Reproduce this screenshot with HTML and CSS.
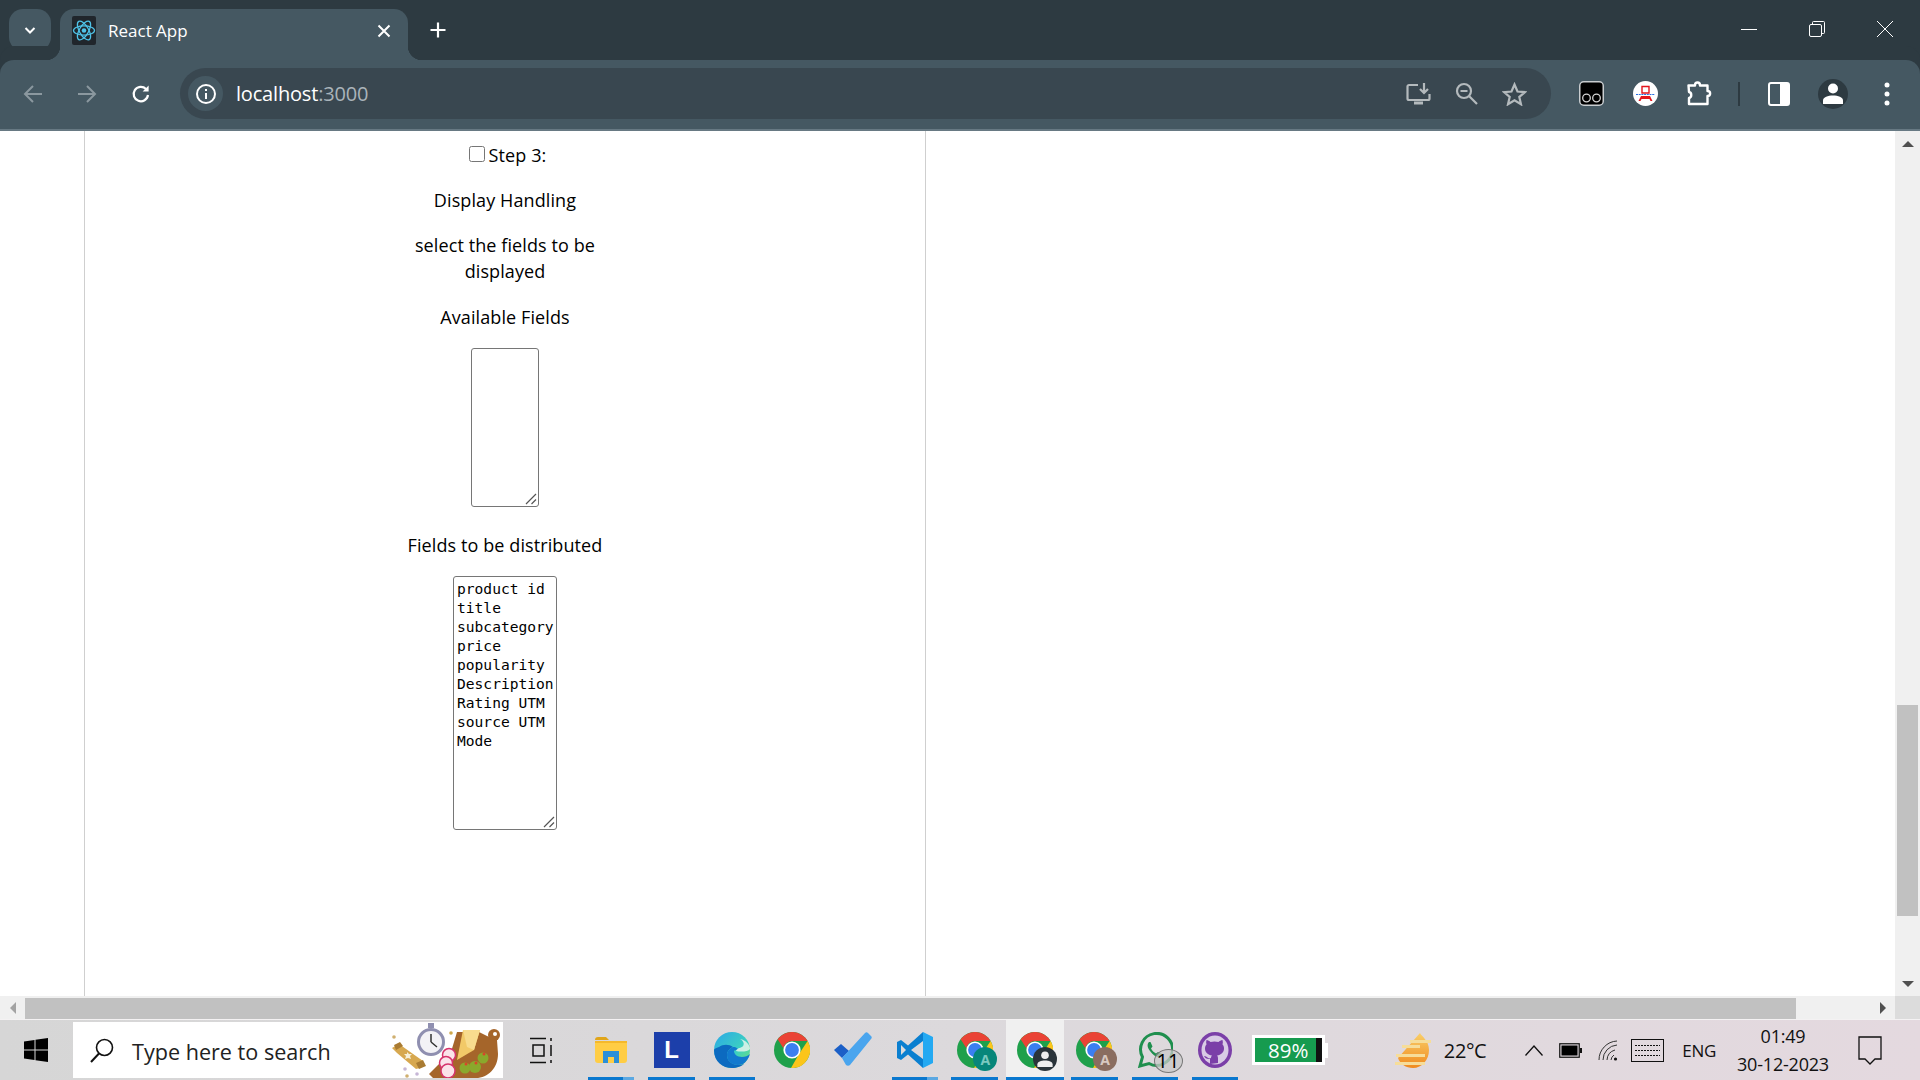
FILE: index.html
```html
<!DOCTYPE html>
<html lang="en">
<head>
    <meta charset="UTF-8">
    <meta name="viewport" content="width=device-width, initial-scale=1.0">
    <title>React App</title>
    <link rel="stylesheet" href="styles.css">
</head>
<body>
    <svg class="defs" aria-hidden="true">
        <symbol id="chrome" viewBox="0 0 36 36">
            <circle cx="18" cy="18" r="18" fill="#1fa04b"/>
            <path d="M33.6 9A18 18 0 0 1 17 36l8-14z" fill="#fcc51a"/>
            <path d="M3.6 7.2A18 18 0 0 1 33.6 9H18a9 9 0 0 0-8.7 7z" fill="#ea4335"/>
            <circle cx="18" cy="18" r="8.6" fill="#fff"/>
            <circle cx="18" cy="18" r="6.9" fill="#3b7ff0"/>
        </symbol>
    </svg>

    <div class="tabstrip">
        <div class="tab-menu">
            <svg width="14" height="14" viewBox="0 0 14 14"><path d="M2.5 5l4.5 4.5L11.5 5" fill="none" stroke="#fff" stroke-width="2"/></svg>
        </div>
        <div class="tab">
            <svg class="favicon" width="24" height="29" viewBox="0 0 24 29">
                <rect width="24" height="29" rx="2" fill="#20262c"/>
                <g fill="none" stroke="#4fc3e8" stroke-width="1.3">
                    <ellipse cx="12" cy="14.5" rx="10.5" ry="4.6"/>
                    <ellipse cx="12" cy="14.5" rx="10.5" ry="4.6" transform="rotate(60 12 14.5)"/>
                    <ellipse cx="12" cy="14.5" rx="10.5" ry="4.6" transform="rotate(120 12 14.5)"/>
                </g>
                <circle cx="12" cy="14.5" r="2.3" fill="#4fc3e8"/>
            </svg>
            <span class="tab-title">React App</span>
            <svg class="tab-close" width="14" height="14" viewBox="0 0 14 14"><path d="M1.5 1.5l11 11M12.5 1.5l-11 11" stroke="#fff" stroke-width="2"/></svg>
        </div>
        <svg class="new-tab" width="18" height="18" viewBox="0 0 18 18"><path d="M9 1.5v15M1.5 9h15" stroke="#fff" stroke-width="2.2"/></svg>
        <div class="win-controls">
            <div class="win-btn"><svg width="16" height="16" viewBox="0 0 16 16"><path d="M0 8.500h16" stroke="#fff"/></svg></div>
            <div class="win-btn"><svg width="16" height="16" viewBox="0 0 16 16" fill="none" stroke="#fff"><rect x=".5" y="3.500" width="12" height="12" rx="1.500"/><path d="M3.500 3V1.500a1 1 0 0 1 1-1h10a1 1 0 0 1 1 1v10a1 1 0 0 1-1 1H13"/></svg></div>
            <div class="win-btn"><svg width="16" height="16" viewBox="0 0 16 16"><path d="M0 0l16 16M16 0L0 16" stroke="#fff"/></svg></div>
        </div>
    </div>

    <div class="toolbar">
        <div class="nav-btn"><svg width="20" height="20" viewBox="0 0 20 20" fill="none" stroke="#8b989f" stroke-width="2"><path d="M19 10H2M10 2l-8 8 8 8"/></svg></div>
        <div class="nav-btn"><svg width="20" height="20" viewBox="0 0 20 20" fill="none" stroke="#8b989f" stroke-width="2"><path d="M1 10h17M10 2l8 8-8 8"/></svg></div>
        <div class="nav-btn"><svg width="20" height="20" viewBox="0 0 20 20" fill="none" stroke="#fff" stroke-width="2.2"><path d="M17 11a7.200 7.200 0 1 1-2-6"/><path d="M17.600 1.500v6h-6" fill="#fff" stroke="none"/></svg></div>
        <div class="omnibox">
            <div class="site-chip">
                <svg width="22" height="22" viewBox="0 0 22 22" fill="none" stroke="#fff" stroke-width="2"><circle cx="11" cy="11" r="9"/><path d="M11 10v6M11 6v2"/></svg>
            </div>
            <span class="url">localhost<span class="url-port">:3000</span></span>
            <div class="omni-btn"><svg width="25" height="24" viewBox="0 0 25 24" fill="none" stroke="#b4babd" stroke-width="2.2"><path d="M12 3H3a1.500 1.500 0 0 0-1.500 1.500v12A1.500 1.500 0 0 0 3 18h19a1.500 1.500 0 0 0 1.500-1.500V12"/><path d="M18 1v9M14 7l4 4 4-4"/><path d="M8 21h9" stroke-width="3"/></svg></div>
            <div class="omni-btn"><svg width="23" height="23" viewBox="0 0 23 23" fill="none" stroke="#b4babd" stroke-width="2.2"><circle cx="9" cy="9" r="7"/><path d="M14 14l8 8M5.500 9h7"/></svg></div>
            <div class="omni-btn"><svg width="25" height="24" viewBox="0 0 25 24" fill="none" stroke="#b4babd" stroke-width="2.2"><path d="M12.500 2.500l3 7 7.500.6-5.700 4.900 1.700 7.300-6.500-3.900-6.500 3.900 1.700-7.300L2 10.100l7.500-.6z"/></svg></div>
        </div>
        <div class="tool-btn">
            <svg width="25" height="25" viewBox="0 0 25 25"><rect x=".75" y=".75" width="23.500" height="23.500" rx="4" fill="#000" stroke="#c9cdd0" stroke-width="1.500"/><circle cx="7.500" cy="17" r="3.800" fill="none" stroke="#d4d4d4" stroke-width="1.300"/><circle cx="17.500" cy="17" r="3.800" fill="none" stroke="#d4d4d4" stroke-width="1.300"/></svg>
        </div>
        <div class="tool-btn">
            <svg width="25" height="25" viewBox="0 0 25 25"><circle cx="12.500" cy="12.500" r="12.500" fill="#fff"/><path d="M9 5.500h7v6.500H9z" fill="none" stroke="#e3161d" stroke-width="1.400"/><path d="M8 15h9l2.500 5h-2l-1-2h-8l-1 2h-2z" fill="#e3161d"/><path d="M3 13.500h19" stroke="#2b6fe0" stroke-width="1.200" stroke-dasharray="2 .7"/></svg>
        </div>
        <div class="tool-btn">
            <svg width="25" height="25" viewBox="0 0 25 25" fill="none" stroke="#fff" stroke-width="2.400"><path d="M1.500 4.500h6.500c0-4 5-4 5 0h7.500v5.500c3.500 0 3.500 5 0 5v8H2v-6c3-.5 3-5.500 0-6z" stroke-linejoin="round"/></svg>
        </div>
        <div class="tool-sep"></div>
        <div class="tool-btn">
            <svg width="22" height="24" viewBox="0 0 22 24"><rect x="1" y="1" width="20" height="22" rx="2" fill="#455862" stroke="#fff" stroke-width="2"/><rect x="12" y="1" width="9" height="22" fill="#fff"/></svg>
        </div>
        <div class="tool-btn">
            <div class="avatar">
                <svg width="20" height="21" viewBox="0 0 20 21" fill="#fff"><circle cx="10" cy="5.500" r="5"/><path d="M0 21v-3.500C0 14 5 12.500 10 12.500s10 1.500 10 5V21z"/></svg>
            </div>
        </div>
        <div class="tool-btn">
            <svg width="6" height="24" viewBox="0 0 6 24" fill="#fff"><circle cx="3" cy="3" r="2.500"/><circle cx="3" cy="12" r="2.500"/><circle cx="3" cy="21" r="2.500"/></svg>
        </div>
    </div>

    <div class="viewport">
        <div class="page">
            <div class="gutter"></div>
            <div class="panel">
                <div class="step">
                    <p class="step-head"><input type="checkbox" class="step-check">Step 3:</p>
                    <p>Display Handling</p>
                    <p class="step-wrap">select the fields to be displayed</p>
                    <p>Available Fields</p>
                    <div class="box-wrap">
                        <textarea class="box box-available" readonly></textarea>
                        <svg class="grip" width="12" height="12" viewBox="0 0 12 12" stroke="#555" stroke-width="1.200"><path d="M1 11L11 1M6.500 11L11 6.500"/></svg>
                    </div>
                    <p>Fields to be distributed</p>
                    <div class="box-wrap">
                        <textarea class="box box-distributed" readonly>product id title subcategory price popularity Description Rating UTM source UTM Mode</textarea>
                        <svg class="grip" width="12" height="12" viewBox="0 0 12 12" stroke="#555" stroke-width="1.200"><path d="M1 11L11 1M6.500 11L11 6.500"/></svg>
                    </div>
                </div>
            </div>
        </div>
        <div class="vscroll">
            <div class="vscroll-arrow"><span class="tri tri-up"></span></div>
            <div class="vscroll-track"><div class="vscroll-thumb"></div></div>
            <div class="vscroll-arrow"><span class="tri tri-down"></span></div>
        </div>
    </div>
    <div class="hscroll">
        <div class="hscroll-arrow"><span class="tri tri-left"></span></div>
        <div class="hscroll-thumb"></div>
        <div class="hscroll-track"></div>
        <div class="hscroll-arrow"><span class="tri tri-right"></span></div>
        <div class="hscroll-corner"></div>
    </div>

    <div class="taskbar">
        <div class="start">
            <svg width="24" height="24" viewBox="0 0 24 24" fill="#000"><path d="M0 3.500l10.500-1.500v9.500H0zM11.500 1.800L24 0v11.500H11.500zM0 12.500h10.500V22L0 20.500zM11.500 12.500H24V24l-12.500-1.800z"/></svg>
        </div>
        <div class="search">
            <svg width="24" height="25" viewBox="0 0 24 25" fill="none" stroke="#111" stroke-width="1.600"><circle cx="14.500" cy="9.500" r="8"/><path d="M9 15.500L1 24" stroke-width="2"/></svg>
            <span class="search-text">Type here to search</span>
            <svg class="search-art" width="110" height="56" viewBox="0 0 110 56">
                <path d="M38 52L60 30l6-20h22l8 4 10 4 1 14c0 14-10 24-22 24H42z" fill="#a5652a"/>
                <circle cx="103" cy="13" r="6" fill="#a5652a"/><circle cx="104" cy="12" r="2" fill="#fff"/>
                <path d="M66 38l6-30h17l-6 20z" fill="#f2c968"/>
                <path d="M72 8h17l-6 20-7-3z" fill="#f8dc8e"/>
                <path d="M1 26l7-4 24 17-3 7-4 1L6 31z" fill="#d7a84f"/>
                <path d="M3 23l6-3 3 4-7 4zM25 41l7-3 3 6-7 3z" fill="#a97b32"/>
                <path d="M16 30l2 2 3 0-2 2 1 3-3-1-3 1 1-3-2-2 3 0z" fill="#f6efd8"/>
                <circle cx="3" cy="15" r="1.800" fill="#d0b070"/><circle cx="60" cy="11" r="1.800" fill="#cfa94d"/><circle cx="14" cy="47" r="1.800" fill="#c6b6d6"/><circle cx="16" cy="54" r="1.800" fill="#d0b070"/><circle cx="26" cy="52" r="1.800" fill="#c6b6d6"/>
                <circle cx="40" cy="20" r="12.500" fill="#f3f2f6" stroke="#8f8fb0" stroke-width="3"/>
                <path d="M40 20v-8M40 20l6 5" stroke="#333" stroke-width="1.500"/>
                <path d="M37 1h6v5h-6z" fill="#8f8fb0"/>
                <circle cx="58" cy="33" r="6.500" fill="#fbe3ea" stroke="#d6336c" stroke-width="1.500"/>
                <circle cx="55" cy="41" r="6.500" fill="#fbe3ea" stroke="#d6336c" stroke-width="1.500"/>
                <circle cx="57" cy="49" r="7" fill="#fbe3ea" stroke="#d6336c" stroke-width="1.500"/>
                <circle cx="74" cy="46" r="5.500" fill="#8aa82c"/><circle cx="84" cy="45" r="6" fill="#8aa82c"/><circle cx="92" cy="36" r="5.500" fill="#8aa82c"/>
                <circle cx="75" cy="42" r="1.500" fill="#d8452a"/><circle cx="85" cy="41" r="1.500" fill="#d8452a"/><circle cx="93" cy="32" r="1.500" fill="#d8452a"/>
            </svg>
        </div>
        <div class="task-view">
            <svg width="24" height="27" viewBox="0 0 24 27" fill="none" stroke="#111" stroke-width="1.500"><path d="M0 1.500h16M3 8h11v11H3zM0 25.500h16M21 1v3M21 8v11M21 23v3"/></svg>
        </div>

        <div class="slot open-stack">
            <svg width="32" height="26" viewBox="0 0 32 26"><path d="M0 3a3 3 0 0 1 3-3h8l3 3h-14z" fill="#e0a51a"/><path d="M0 4h29a3 3 0 0 1 3 3v16a3 3 0 0 1-3 3H3a3 3 0 0 1-3-3z" fill="#ffcd45"/><path d="M0 4h32v2H0z" fill="#f5b92b"/><path d="M8 14h16v12h-5v-6h-6v6H8z" fill="#2a8fd8"/></svg>
        </div>
        <div class="slot open">
            <div class="letter-logo">L</div>
        </div>
        <div class="slot open">
            <svg width="38" height="36" viewBox="0 0 38 36">
                <defs>
                    <linearGradient id="edgeTop" x1="0" y1="0" x2="1" y2="1"><stop offset="0" stop-color="#2aa8e8"/><stop offset=".6" stop-color="#3dd0c0"/><stop offset="1" stop-color="#7be36a"/></linearGradient>
                </defs>
                <circle cx="19" cy="18" r="18" fill="url(#edgeTop)"/>
                <path d="M1 18C1 30 10 36 19 36c5 0 10-2 12-4-8 3-17-1-17-9 0-4 3-7 6-8-4-3-10-3-14 0-3 1-5 2-5 3z" fill="#0c6ac0"/>
                <path d="M21 19c0 3 3 6 8 6 3 0 6-1 8-3-1 4-4 8-7 10-8 3-16-1-16-9 0-4 3-7 6-8 4 0 5 2 5 3-2 0-4 0-4 1z" fill="#1279cf"/>
                <path d="M23 19c4 1 12 1 14-2 0-4-4-9-10-10 4 2 5 6 2 8-2 1-5 1-6 4z" fill="#e4f4ec" opacity=".85"/>
            </svg>
        </div>
        <div class="slot"><svg class="chrome" viewBox="0 0 36 36"><use href="#chrome"/></svg></div>
        <div class="slot">
            <svg width="38" height="36" viewBox="0 0 38 36"><path d="M0 18l7-6 8 7-7 7z" fill="#1b5fc7"/><path d="M8 26L31 1c1-1 2-1 3 0l3 3c1 1 1 2 0 3L16 33c-1 1-3 1-4 0z" fill="#4aa5ee"/></svg>
        </div>
        <div class="slot open-stack-code">
            <svg width="36" height="36" viewBox="0 0 36 36"><path d="M26 0l10 5v26l-10 5z" fill="#24a9f2"/><path d="M26 0v9L14 18l12 9v9L11 22.500 4 28l-4-2v-16l4-2 7 5.500z" fill="#0a7fd0"/><path d="M4 13v10l5-5z" fill="#dcdcdc"/></svg>
        </div>
        <div class="slot open slot-teal">
            <svg class="chrome" viewBox="0 0 36 36"><use href="#chrome"/></svg>
            <span class="profile-badge profile-teal">A</span>
        </div>
        <div class="slot slot-active">
            <svg class="chrome" viewBox="0 0 36 36"><use href="#chrome"/></svg>
            <span class="profile-badge profile-dark">
                <svg width="16" height="16" viewBox="0 0 20 21" fill="#eee"><circle cx="10" cy="5.500" r="5"/><path d="M0 21v-3.500C0 14 5 12.500 10 12.500s10 1.500 10 5V21z"/></svg>
            </span>
        </div>
        <div class="slot open slot-brown">
            <svg class="chrome" viewBox="0 0 36 36"><use href="#chrome"/></svg>
            <span class="profile-badge profile-brown">A</span>
        </div>
        <div class="slot open">
            <svg width="36" height="36" viewBox="0 0 36 36" fill="none"><path d="M3 34l2.500-9A16 16 0 1 1 12 31.500z" stroke="#1f8f4e" stroke-width="3"/><path d="M12 10c-2 2-2 5 1 9s7 7 10 6l2-3-4-2-2 1.500c-2-1-4-3-5-5l1.500-2-2-4.500z" fill="#1f8f4e"/></svg>
            <span class="count-badge">11</span>
        </div>
        <div class="slot open">
            <svg width="34" height="36" viewBox="0 0 34 36"><ellipse cx="17" cy="18" rx="17" ry="18" fill="#7b3fa8"/><ellipse cx="17" cy="18" rx="13.500" ry="14.500" fill="#d9cbe5"/><path d="M12 32v-5c-3 .5-5-1-6-3 2 0 3 1 4 2 1 .5 2 .5 3 0 0-1 .5-2 1-2.500-4-.5-7-3-7-7 0-2 .5-3 1.500-4-.5-1.500-.5-3 0-4.500 1.500 0 3 1 4 2 3-.7 5-.7 8 0 1-1 2.500-2 4-2 .5 1.500.5 3 0 4.500 1 1 1.500 2 1.500 4 0 4-3 6.500-7 7 .7.7 1 1.500 1 3v4.500z" fill="#7b3fa8"/></svg>
        </div>

        <div class="battery-widget">
            <div class="battery-body"><span class="battery-text">89%</span><span class="battery-tail"></span></div>
            <span class="battery-nub"></span>
        </div>

        <div class="tray">
            <svg class="weather" width="36" height="35" viewBox="0 0 36 35">
                <defs>
                    <linearGradient id="sunFill" x1="0" y1="0" x2="0" y2="1"><stop offset="0" stop-color="#f9cf6a"/><stop offset="1" stop-color="#f08a1e"/></linearGradient>
                </defs>
                <path d="M25 0c1 3 9 7 9 17 0 10-7 18-16 18-7 0-13-4-15-10z" fill="url(#sunFill)"/>
                <g fill="#f6dd9a"><rect x="15" y="7" width="21" height="3"/><rect x="7" y="12" width="18" height="3"/><rect x="1" y="21" width="29" height="3"/><rect x="0" y="29" width="30" height="3"/></g>
            </svg>
            <span class="temp">22°C</span>
            <svg class="tray-chevron" width="18" height="11" viewBox="0 0 18 11" fill="none" stroke="#111" stroke-width="1.300"><path d="M.5 10.500L9 1l8.500 9.500"/></svg>
            <svg class="tray-battery" width="23" height="15" viewBox="0 0 23 15"><rect x=".75" y=".75" width="19.500" height="13.500" fill="none" stroke="#111" stroke-width="1.200"/><rect x="2.500" y="2.500" width="16" height="10" fill="#000"/><rect x="21" y="5" width="2" height="5" fill="#111"/></svg>
            <svg class="tray-wifi" width="20" height="21" viewBox="0 0 20 21" fill="none" stroke="#333" stroke-width="1"><path d="M1 20A19 19 0 0 1 19 1M5 20A15 15 0 0 1 19 5M9 20a11 11 0 0 1 8-10M13 20a7 7 0 0 1 3-5"/><circle cx="17.500" cy="19" r="1.600" fill="#111" stroke="none"/></svg>
            <svg class="tray-keys" width="33" height="23" viewBox="0 0 33 23" fill="none" stroke="#111"><rect x=".5" y=".5" width="32" height="22"/><path d="M4 6.500h25M4 11.500h25M4 16.500h25" stroke-dasharray="2 1"/></svg>
            <span class="lang">ENG</span>
            <div class="clock">
                <span>01:49</span>
                <span>30-12-2023</span>
            </div>
            <svg class="notif" width="24" height="29" viewBox="0 0 24 29" fill="none" stroke="#111" stroke-width="1.300"><path d="M1 1h22v22h-6l-5 5-5-5H1z"/></svg>
        </div>
    </div>
</body>
</html>
```

FILE: styles.css
```css
* {
    box-sizing: border-box;
}
html, body {
    height: 100%;
}
body {
    margin: 0;
    display: flex;
    flex-direction: column;
    overflow: hidden;
    background: #fff;
    font-family: "Open Sans", "Noto Sans", sans-serif;
    color: #000;
}
.defs {
    width: 0;
    height: 0;
    position: absolute;
}

/* browser chrome */
.tabstrip {
    display: flex;
    height: 60px;
    flex-shrink: 0;
    background: #2d3a41;
    padding-top: 9px;
}
.tab-menu {
    width: 42px;
    height: 42px;
    margin-left: 9px;
    border-radius: 14px;
    background: #455862;
    display: flex;
    align-items: center;
    justify-content: center;
}
.tab {
    position: relative;
    width: 348px;
    margin-left: 9px;
    border-radius: 14px 14px 0 0;
    background: #455862;
    display: flex;
    align-items: center;
    padding: 0 17px 8px 12px;
}
.tab::before, .tab::after {
    content: "";
    position: absolute;
    bottom: 0;
    width: 14px;
    height: 14px;
}
.tab::before {
    left: -14px;
    background: radial-gradient(circle at 0 0, #2d3a41 14px, #455862 14.5px);
}
.tab::after {
    right: -14px;
    background: radial-gradient(circle at 100% 0, #2d3a41 14px, #455862 14.5px);
}
.favicon {
    flex-shrink: 0;
}
.tab-title {
    margin-left: 12px;
    font-size: 17px;
    color: #fff;
    flex: 1;
}
.new-tab {
    margin: 12px 0 0 21px;
}
.win-controls {
    display: flex;
    margin: -9px 1px 0 auto;
}
.win-btn {
    width: 68px;
    height: 58px;
    display: flex;
    align-items: center;
    justify-content: center;
}
.toolbar {
    display: flex;
    align-items: center;
    height: 71px;
    flex-shrink: 0;
    padding: 0 6px 2px;
    background: #455862;
    border-bottom: 2px solid #677983;
    border-radius: 14px 14px 0 0;
    box-shadow: 0 -14px 0 0 #2d3a41;
}
.nav-btn {
    width: 54px;
    display: flex;
    justify-content: center;
}
.omnibox {
    width: 1371px;
    height: 51px;
    margin: 0 13px 0 12px;
    border-radius: 26px;
    background: #394750;
    display: flex;
    align-items: center;
    padding: 0 13px 0 8px;
}
.site-chip {
    width: 35px;
    height: 35px;
    border-radius: 50%;
    background: #455862;
    display: flex;
    align-items: center;
    justify-content: center;
}
.url {
    margin-left: 13px;
    font-size: 20px;
    color: #fff;
    letter-spacing: -0.18px;
    flex: 1;
}
.url-port {
    color: #aab4ba;
}
.omni-btn {
    width: 48px;
    display: flex;
    justify-content: center;
}
.tool-btn {
    width: 54px;
    display: flex;
    justify-content: center;
    align-items: center;
}
.tool-sep {
    width: 2px;
    height: 24px;
    margin: 0 12px;
    background: #2d3a41;
}
.avatar {
    width: 30px;
    height: 30px;
    border-radius: 50%;
    background: #2d3a41;
    display: flex;
    align-items: center;
    justify-content: center;
}

/* page */
.viewport {
    flex: 1;
    min-height: 0;
    display: flex;
}
.page {
    flex: 1;
    display: flex;
}
.gutter {
    width: 85px;
    border-right: 1px solid #cfcfcf;
}
.panel {
    width: 841px;
    border-right: 1px solid #cfcfcf;
    padding-top: 11px;
}
.step {
    width: 200px;
    margin-left: 320px;
    display: flex;
    flex-direction: column;
    align-items: center;
    text-align: center;
    font-size: 18px;
    line-height: 26px;
    letter-spacing: 0.1px;
}
.step p {
    margin: 0 0 19px;
}
.step .step-head {
    padding-left: 5px;
}
.step .step-wrap {
    margin-bottom: 20px;
}
.step-check {
    width: 16px;
    height: 16px;
    margin: 0 4px 0 0;
    vertical-align: 0;
}
.box-wrap {
    position: relative;
    margin: -1px 0 25px;
}
.box {
    display: block;
    padding: 2px 0 2px 3px;
    border: 1px solid #767676;
    border-radius: 3px;
    background: #fff;
    font-family: "DejaVu Sans Mono", "Liberation Mono", monospace;
    font-size: 14.6px;
    line-height: 19px;
    letter-spacing: 0;
    color: #000;
    outline: none;
    resize: none;
}
.box-available {
    width: 68px;
    height: 159px;
}
.box-distributed {
    width: 104px;
    height: 254px;
}
.grip {
    position: absolute;
    right: 2px;
    bottom: 2px;
}

/* scrollbars */
.vscroll {
    width: 25px;
    flex-shrink: 0;
    background: #f0f0f0;
    display: flex;
    flex-direction: column;
}
.vscroll-arrow {
    height: 25px;
    display: flex;
    align-items: center;
    justify-content: center;
}
.vscroll-track {
    flex: 1;
    padding-top: 549px;
}
.vscroll-thumb {
    height: 211px;
    margin: 0 2px;
    background: #c1c1c1;
}
.tri {
    width: 0;
    height: 0;
    border-style: solid;
    border-color: transparent;
}
.tri-up {
    border-width: 0 6px 6px;
    border-bottom-color: #505050;
}
.tri-down {
    border-width: 6px 6px 0;
    border-top-color: #505050;
}
.tri-left {
    border-width: 6px 6px 6px 0;
    border-right-color: #a3a3a3;
}
.tri-right {
    border-width: 6px 0 6px 6px;
    border-left-color: #505050;
}
.hscroll {
    display: flex;
    height: 23px;
    flex-shrink: 0;
    background: #f0f0f0;
}
.hscroll-arrow {
    width: 25px;
    display: flex;
    align-items: center;
    justify-content: center;
}
.hscroll-thumb {
    width: 1771px;
    margin-top: 2px;
    background: #c1c1c1;
}
.hscroll-track {
    flex: 1;
}
.hscroll-corner {
    width: 25px;
    background: #dcdcdc;
}

/* taskbar */
.taskbar {
    display: flex;
    align-items: stretch;
    height: 61px;
    flex-shrink: 0;
    border-top: 1px solid #f4f2f3;
    background: linear-gradient(90deg, #d6d6d6, #dcd9dc 50%, #e4d9df);
}
.start {
    width: 73px;
    display: flex;
    align-items: center;
    justify-content: center;
    padding-right: 2px;
}
.search {
    position: relative;
    width: 430px;
    margin: 2px 0 2px;
    background: #fff;
    display: flex;
    align-items: center;
    padding-left: 17px;
    overflow: hidden;
}
.search-text {
    margin: 2px 0 0 18px;
    font-size: 21.6px;
    color: #222;
}
.search-art {
    position: absolute;
    right: 2px;
    top: 0;
}
.task-view {
    width: 78px;
    display: flex;
    align-items: center;
    justify-content: center;
}
.slot {
    position: relative;
    width: 60.4px;
    display: flex;
    align-items: center;
    justify-content: center;
}
.chrome {
    width: 36px;
    height: 36px;
}
.open::after, .open-stack::after, .open-stack-code::after {
    content: "";
    position: absolute;
    left: 7px;
    right: 7px;
    bottom: 0;
    height: 3px;
    background: #0a78cf;
}
.open-stack::after, .open-stack-code::after {
    background: linear-gradient(90deg, #0a78cf 76%, #5ba8e2 76%);
}
.open-stack-code {
    margin-left: 2px;
}
.slot-teal {
    margin-left: -1px;
}
.slot-brown {
    margin-left: -1px;
}
.slot-active {
    background: #f0f0f0;
    margin: 0 1px;
    width: 58.4px;
}
.slot-active::after {
    content: "";
    position: absolute;
    left: 0;
    right: 0;
    bottom: 0;
    height: 3px;
    background: #0a78cf;
}
.letter-logo {
    width: 36px;
    height: 36px;
    background: #1c3faa;
    color: #fff;
    font-family: "Liberation Sans", sans-serif;
    font-weight: 700;
    font-size: 24px;
    display: flex;
    align-items: center;
    justify-content: center;
}
.profile-badge {
    position: absolute;
    left: 29px;
    top: 27px;
    width: 24px;
    height: 24px;
    border-radius: 50%;
    display: flex;
    align-items: center;
    justify-content: center;
    font-size: 14px;
    font-weight: 700;
}
.profile-teal {
    background: #07867a;
    color: #7ac9bf;
}
.profile-dark {
    left: 27px;
    background: #2a343a;
}
.profile-brown {
    background: #8a6d60;
    color: #d8c8c0;
}
.count-badge {
    position: absolute;
    left: 29px;
    top: 29px;
    width: 29px;
    height: 24px;
    border-radius: 50%;
    border: 1px solid #777;
    background: rgba(200, 200, 200, 0.75);
    font-size: 20px;
    line-height: 22px;
    text-align: center;
    color: #000;
}
.battery-widget {
    display: flex;
    align-items: center;
    margin-left: 7px;
}
.battery-body {
    width: 73px;
    height: 30px;
    border: 3px solid #fff;
    background: #169b4f;
    display: flex;
    color: #fff;
}
.battery-text {
    flex: 1;
    font-size: 20.5px;
    line-height: 24px;
    text-align: center;
    padding-left: 5px;
}
.battery-tail {
    width: 6px;
    background: #111;
}
.battery-nub {
    width: 3px;
    height: 15px;
    background: #fff;
}
.tray {
    margin-left: auto;
    display: flex;
    align-items: center;
    padding-right: 38px;
    color: #111;
}
.temp {
    margin-left: 13px;
    font-size: 20px;
    letter-spacing: -0.4px;
}
.tray-chevron {
    margin-left: 39px;
}
.tray-battery {
    margin-left: 16px;
}
.tray-wifi {
    margin-left: 16px;
}
.tray-keys {
    margin-left: 13px;
}
.lang {
    margin-left: 18px;
    font-size: 17px;
    letter-spacing: -0.3px;
}
.clock {
    width: 112px;
    margin-left: 11px;
    display: flex;
    flex-direction: column;
    align-items: center;
    gap: 7px;
    font-size: 18px;
    line-height: 21px;
    letter-spacing: -0.2px;
}
.notif {
    margin-left: 19px;
}
```
